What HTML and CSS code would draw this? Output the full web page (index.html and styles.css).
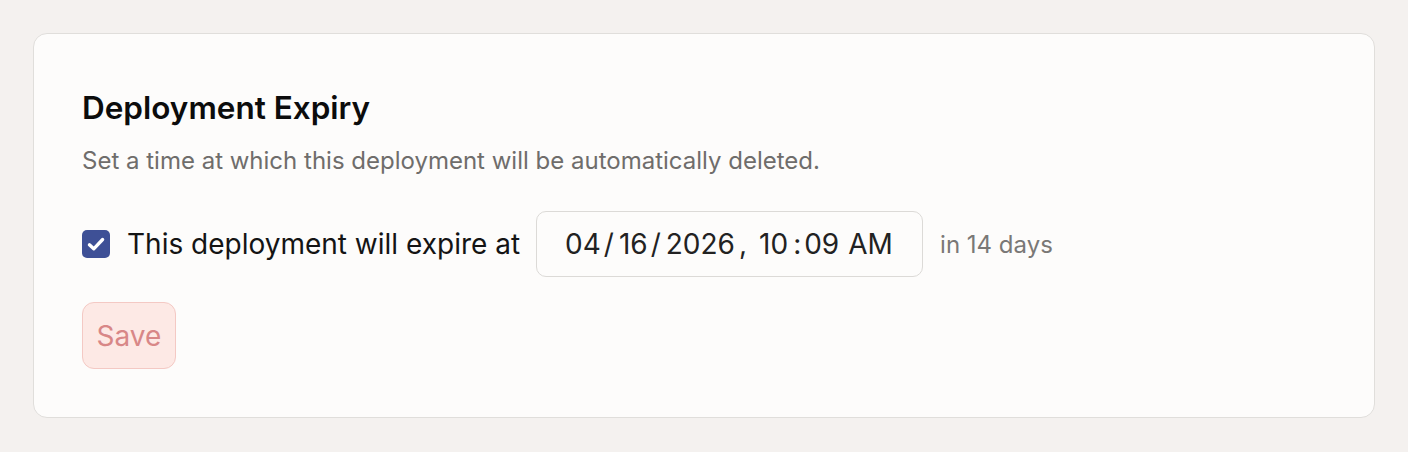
FILE: index.html
```html
<!DOCTYPE html>
<html lang="en">
<head>
<meta charset="utf-8">
<title>Deployment Expiry</title>
<link rel="stylesheet" href="styles.css">
</head>
<body>
<section class="card">
  <h2 class="title">Deployment Expiry</h2>
  <p class="desc">Set a time at which this deployment will be automatically deleted.</p>
  <div class="row">
    <label class="check">
      <span class="box">
        <svg viewBox="0 0 16 16" width="24" height="24"><path d="M3.6 8.5 L6.5 11.2 L12.4 5" fill="none" stroke="#fff" stroke-width="2.2" stroke-linecap="round" stroke-linejoin="round"/></svg>
      </span>
      <span class="label">This deployment will expire at</span>
    </label>
    <div class="date">
      <span>04</span><span class="sep">/</span><span>16</span><span class="sep">/</span><span>2026</span><span class="comma">,</span><span>10</span><span class="colon">:</span><span>09</span><span class="ampm">AM</span>
    </div>
    <span class="rel">in 14 days</span>
  </div>
  <button class="save" type="button">Save</button>
</section>
</body>
</html>
```
FILE: styles.css
```css
html, body {
  margin: 0;
  padding: 0;
}
body {
  background: #f4f1ef;
  padding: 33px;
  font-family: Inter, "Noto Sans", sans-serif;
  color: #111;
}
.card {
  box-sizing: border-box;
  width: 1342px;
  height: 385px;
  background: #fdfcfb;
  border: 1.75px solid #e0dedb;
  border-radius: 14px;
  padding: 50px 48px 0;
}
.title {
  margin: 0;
  font-size: 31.5px;
  line-height: 47px;
  font-weight: 600;
  color: #0c0c0c;
}
.desc {
  margin: 0;
  margin-top: 12px;
  font-size: 24px;
  line-height: 35px;
  color: #6f6d6b;
}
.row {
  display: flex;
  align-items: center;
  margin-top: 33px;
  height: 66px;
}
.check {
  display: flex;
  align-items: center;
}
.box {
  width: 28px;
  height: 28px;
  border-radius: 5px;
  background: #3e5096;
  display: flex;
  align-items: center;
  justify-content: center;
}
.label {
  margin-left: 17px;
  font-size: 28px;
  color: #141414;
}
.date {
  box-sizing: border-box;
  margin-left: 16px;
  width: 387px;
  height: 66px;
  border: 1.75px solid #dcdad7;
  border-radius: 10px;
  display: flex;
  align-items: center;
  padding-left: 28px;
  font-size: 28px;
  color: #222;
}
.sep { margin: 0 5px 0 3px; }
.comma { margin: 0 12px 0 4px; }
.colon { margin: 0 3px 0 5px; }
.ampm { margin-left: 9px; }
.rel {
  margin-left: 17px;
  font-size: 24px;
  color: #7a7876;
}
.save {
  display: block;
  margin-top: 25px;
  width: 94px;
  height: 67px;
  border-radius: 12px;
  border: 1.75px solid #f4c9c4;
  background: #fde9e5;
  color: #d88787;
  font-family: Inter, "Noto Sans", sans-serif;
  font-size: 28px;
  padding: 0;
}
```
